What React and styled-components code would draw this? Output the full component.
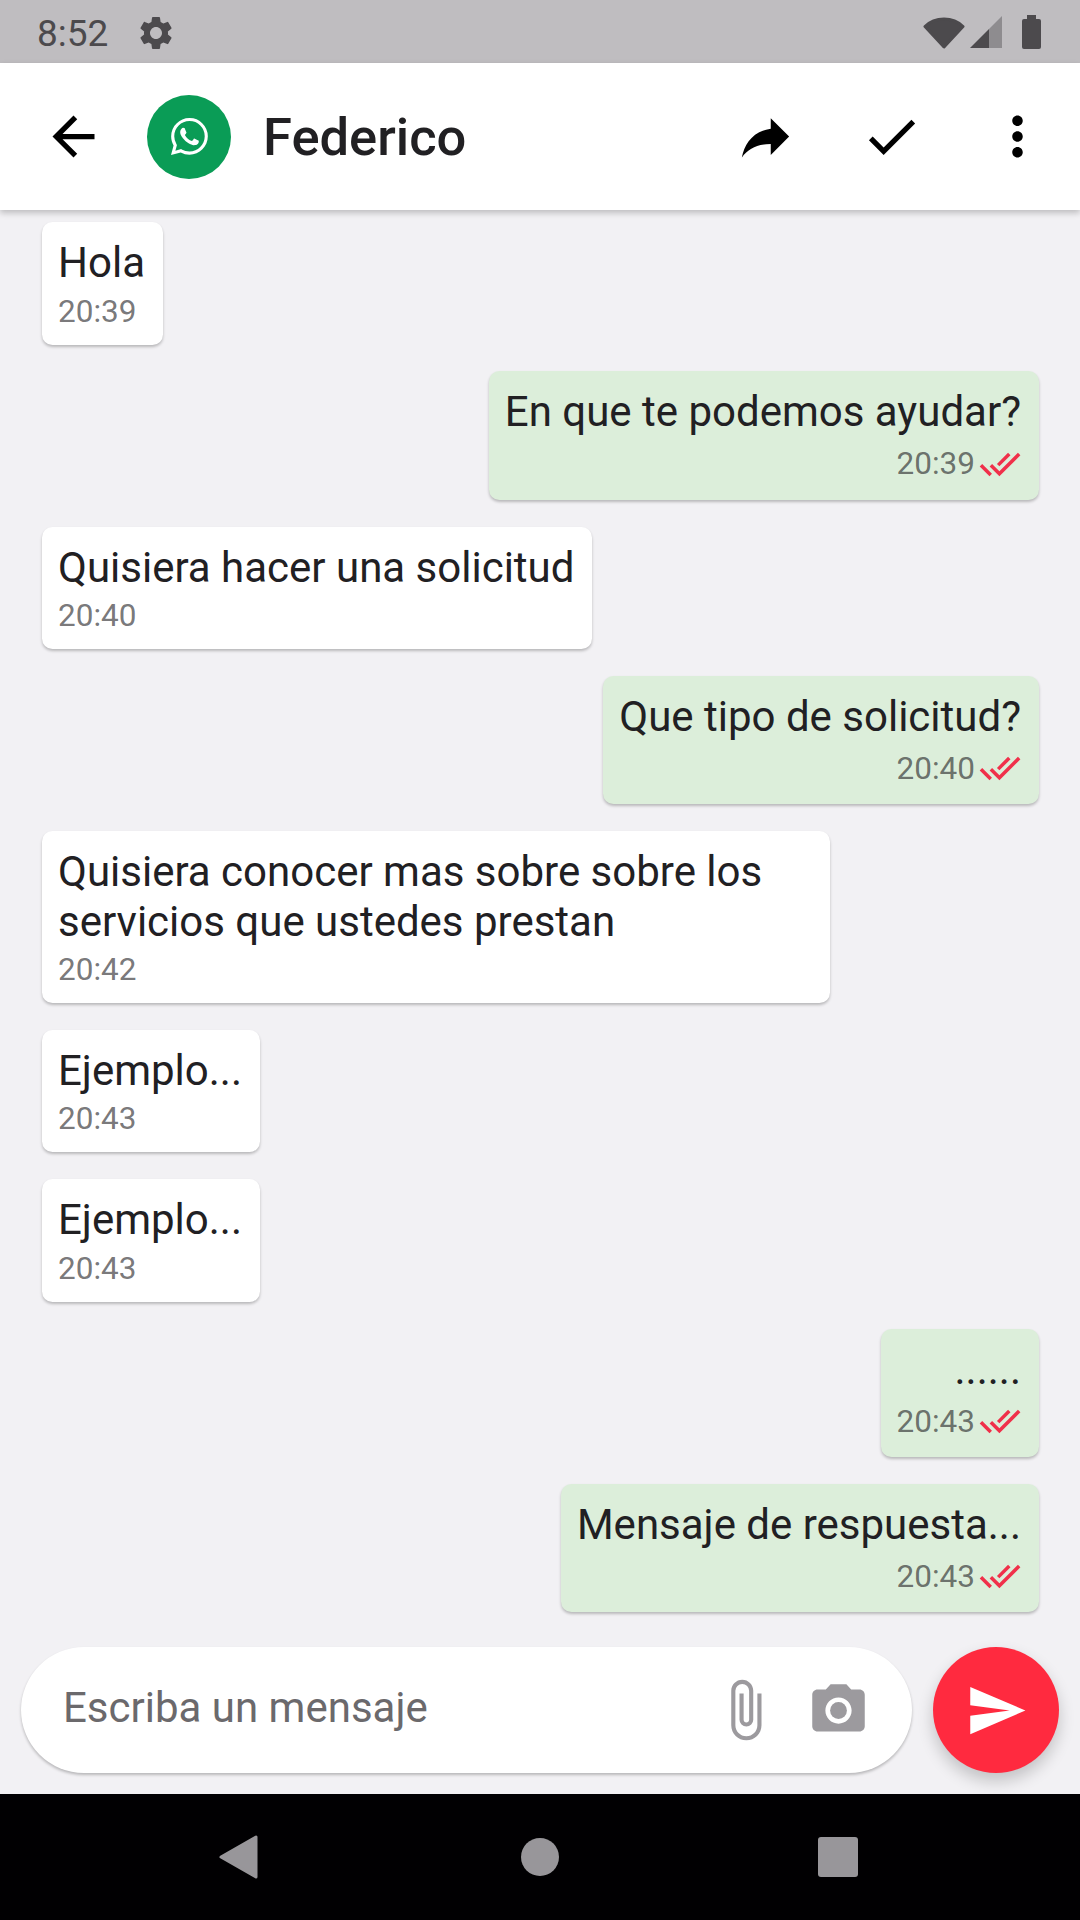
import React from "react";
import styled, { createGlobalStyle } from "styled-components";
import {
	MdArrowBack,
	MdAttachFile,
	MdCheck,
	MdDoneAll,
	MdMoreVert,
	MdPhotoCamera,
	MdReply,
	MdSend,
	MdSettings,
} from "react-icons/md";
import { BsWhatsapp } from "react-icons/bs";

const GlobalStyle = createGlobalStyle`
	* {
		box-sizing: border-box;
	}
	body {
		margin: 0;
		font-family: Roboto, "Liberation Sans", sans-serif;
	}
`;

const messages = [
	{ id: 1, text: "Hola", time: "20:39" },
	{ id: 2, text: "En que te podemos ayudar?", time: "20:39", sent: true },
	{ id: 3, text: "Quisiera hacer una solicitud", time: "20:40" },
	{ id: 4, text: "Que tipo de solicitud?", time: "20:40", sent: true },
	{
		id: 5,
		text: "Quisiera conocer mas sobre sobre los servicios que ustedes prestan",
		time: "20:42",
	},
	{ id: 6, text: "Ejemplo...", time: "20:43" },
	{ id: 7, text: "Ejemplo...", time: "20:43" },
	{ id: 8, text: "......", time: "20:43", sent: true },
	{ id: 9, text: "Mensaje de respuesta...", time: "20:43", sent: true },
];

const App = () => {
	return (
		<Screen>
			<GlobalStyle />
			<StatusBar>
				<StatusTime>8:52</StatusTime>
				<MdSettings size={40} />
				<StatusIcons>
					<svg width="42" height="33" viewBox="0 0 42 33">
						<path
							d="M2 10.5C7.5 5 14 3 21 3s13.500 2 19 7.500L21 31z"
							fill="#4c4a4d"
							stroke="#4c4a4d"
							strokeWidth="3"
							strokeLinejoin="round"
						/>
					</svg>
					<svg width="33" height="32" viewBox="0 0 33 32">
						<path d="M0 32 19 13v19z" fill="#4c4a4d" />
						<path d="M19 13 32 0v32H19z" fill="#8e8c8f" />
					</svg>
					<Battery />
				</StatusIcons>
			</StatusBar>
			<AppBar>
				<LeadingButton>
					<MdArrowBack size={63} />
				</LeadingButton>
				<Avatar>
					<BsWhatsapp size={37} />
				</Avatar>
				<Title>Federico</Title>
				<IconButton>
					<MirroredIcon>
						<MdReply size={63} />
					</MirroredIcon>
				</IconButton>
				<IconButton>
					<MdCheck size={63} />
				</IconButton>
				<IconButton>
					<MdMoreVert size={63} />
				</IconButton>
			</AppBar>
			<MessageList>
				{messages.map((message) => (
					<Bubble key={message.id} $sent={message.sent}>
						<Text>{message.text}</Text>
						<Meta $sent={message.sent}>
							<Time>{message.time}</Time>
							{message.sent && <MdDoneAll size={42} color="#f0304a" />}
						</Meta>
					</Bubble>
				))}
			</MessageList>
			<Composer>
				<InputPill>
					<Placeholder>Escriba un mensaje</Placeholder>
					<AttachIcon>
						<MdAttachFile size={66} />
					</AttachIcon>
					<CameraIcon>
						<MdPhotoCamera size={63} />
					</CameraIcon>
				</InputPill>
				<SendButton>
					<MdSend size={63} />
				</SendButton>
			</Composer>
			<NavBar>
				<NavItem>
					<BackTriangle width="40" height="44" viewBox="0 0 40 44">
						<path
							d="M2 22 37 2v40z"
							fill="#98969a"
							stroke="#98969a"
							strokeWidth="3"
							strokeLinejoin="round"
						/>
					</BackTriangle>
				</NavItem>
				<NavItem>
					<HomeDot />
				</NavItem>
				<NavItem>
					<RecentSquare />
				</NavItem>
			</NavBar>
		</Screen>
	);
};

const Screen = styled.div`
	width: 1080px;
	height: 1920px;
	display: flex;
	flex-direction: column;
	background: #f2f1f4;
	overflow: hidden;
`;

const StatusBar = styled.div`
	height: 63px;
	flex-shrink: 0;
	display: flex;
	align-items: center;
	gap: 28px;
	padding: 3px 39px 0 37px;
	background: #bfbdc0;
	color: #4c4a4d;
`;

const StatusTime = styled.span`
	font-size: 37px;
`;

const StatusIcons = styled.div`
	margin-left: auto;
	display: flex;
	align-items: center;
	gap: 5px;
	margin-top: -2px;
`;

const Battery = styled.div`
	position: relative;
	width: 19px;
	height: 30px;
	margin: 4px 0 0 14px;
	border-radius: 2px;
	background: #4c4a4d;
	&::before {
		content: "";
		position: absolute;
		top: -4px;
		left: 5px;
		width: 9px;
		height: 4px;
		background: #4c4a4d;
	}
`;

const AppBar = styled.div`
	position: relative;
	z-index: 1;
	height: 147px;
	flex-shrink: 0;
	display: flex;
	align-items: center;
	background: #fff;
	box-shadow: 0 3px 6px rgba(0, 0, 0, 0.22);
	color: #000;
`;

const IconButton = styled.div`
	width: 126px;
	height: 126px;
	flex-shrink: 0;
	display: flex;
	align-items: center;
	justify-content: center;
`;

const LeadingButton = styled(IconButton)`
	width: 147px;
`;

const MirroredIcon = styled.div`
	display: flex;
	transform: scaleX(-1);
`;

const Avatar = styled.div`
	width: 84px;
	height: 84px;
	flex-shrink: 0;
	display: flex;
	align-items: center;
	justify-content: center;
	border-radius: 50%;
	background: #0a9c56;
	color: #fff;
`;

const Title = styled.h1`
	flex: 1;
	margin: 0 0 0 32px;
	font-size: 52.5px;
	font-weight: 500;
	color: #212023;
`;

const MessageList = styled.div`
	flex: 1;
	display: flex;
	flex-direction: column;
	gap: 26.8px;
	padding: 12px 41px 0 42px;
`;

const Bubble = styled.div`
	max-width: 788px;
	display: flex;
	flex-direction: column;
	align-self: ${(props) => (props.$sent ? "flex-end" : "flex-start")};
	align-items: ${(props) => (props.$sent ? "flex-end" : "flex-start")};
	padding: 16px 18px 15px 16px;
	border-radius: 10.5px;
	background: ${(props) => (props.$sent ? "#dceeda" : "#fff")};
	box-shadow: 0 2px 3px rgba(0, 0, 0, 0.24);
`;

const Text = styled.div`
	font-size: 42px;
	line-height: 49.5px;
	color: #212023;
`;

const Meta = styled.div`
	display: flex;
	align-items: center;
	gap: 4px;
	margin-top: ${(props) => (props.$sent ? "6px" : "5px")};
`;

const Time = styled.span`
	font-size: 31.5px;
	line-height: 37px;
	color: rgba(33, 32, 35, 0.62);
`;

const Composer = styled.div`
	flex-shrink: 0;
	display: flex;
	gap: 21px;
	padding: 0 21px 21px;
`;

const InputPill = styled.div`
	flex: 1;
	height: 126px;
	display: flex;
	align-items: center;
	padding-left: 42px;
	border-radius: 63px;
	background: #fff;
	box-shadow: 0 2px 3px rgba(0, 0, 0, 0.24);
`;

const Placeholder = styled.span`
	flex: 1;
	padding-bottom: 5px;
	font-size: 42px;
	color: #6b696c;
`;

const AttachIcon = styled.div`
	display: flex;
	margin-right: 29px;
	color: #9c9a9e;
`;

const CameraIcon = styled.div`
	display: flex;
	margin-right: 42px;
	color: #9c9a9e;
`;

const SendButton = styled.div`
	width: 126px;
	height: 126px;
	flex-shrink: 0;
	display: flex;
	align-items: center;
	justify-content: center;
	border-radius: 50%;
	background: #ff2a3f;
	color: #fff;
	box-shadow: 0 8px 16px rgba(0, 0, 0, 0.2);
`;

const NavBar = styled.div`
	height: 126px;
	flex-shrink: 0;
	display: flex;
	align-items: center;
	justify-content: center;
	background: #010002;
`;

const NavItem = styled.div`
	width: 300px;
	display: flex;
	justify-content: center;
`;

const BackTriangle = styled.svg`
	margin-right: 2px;
`;

const HomeDot = styled.div`
	width: 38px;
	height: 38px;
	border-radius: 50%;
	background: #98969a;
`;

const RecentSquare = styled.div`
	width: 40px;
	height: 40px;
	margin-right: 4px;
	border-radius: 3px;
	background: #98969a;
`;

export default App;
